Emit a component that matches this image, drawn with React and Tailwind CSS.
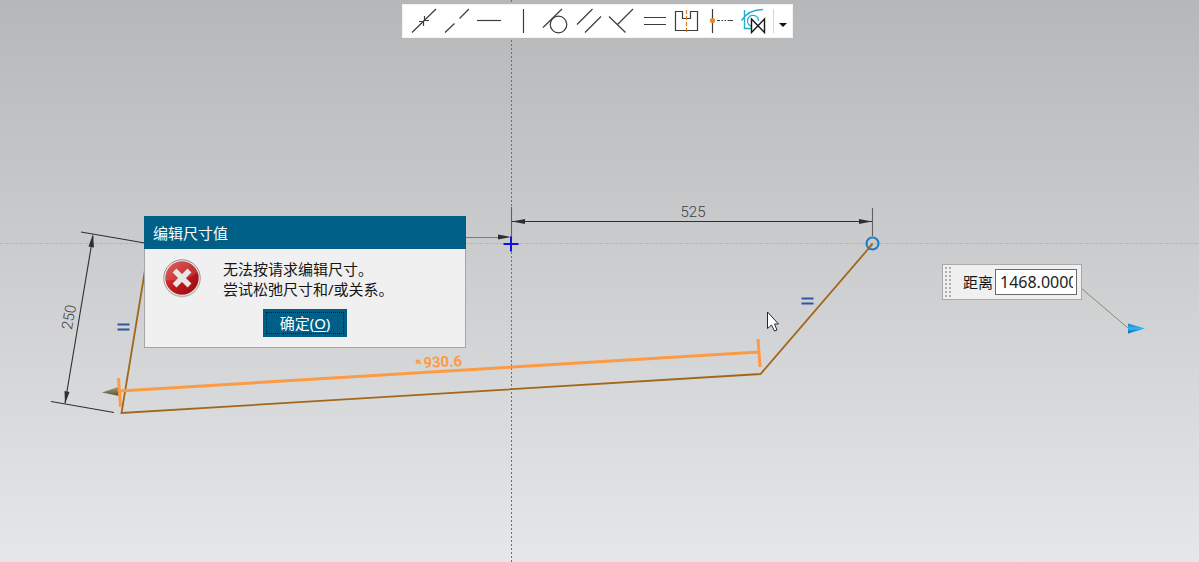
import React from "react";

const tools = [
  {
    label: "重合",
    box: "408 4 33 34",
    art: (
      <>
        <path d="M412 32.5 436 9" />
        <path d="M419 21.5H423.5V26M424.5 16V20.5H429" />
      </>
    ),
  },
  {
    label: "共线",
    box: "441 4 33 34",
    art: <path d="M445 32.5 454.5 23.5M459.5 18.5 469 9" />,
  },
  { label: "水平", box: "474 4 33 34", art: <path d="M477 20.5H501" /> },
  { label: "竖直", box: "507 4 33 34", art: <path d="M523.5 9V33" /> },
  {
    label: "相切",
    box: "540 4 33 34",
    art: (
      <>
        <path d="M543 27.5 562 9" />
        <circle cx="558.5" cy="24.5" r="8.3" />
      </>
    ),
  },
  {
    label: "平行",
    box: "573 4 33 34",
    art: <path d="M577 24.5 592.5 9M585 32.5 601 16.5" />,
  },
  {
    label: "垂直",
    box: "606 4 33 34",
    art: <path d="M609 16.5 625.5 32.5M617.5 24.5 633 9" />,
  },
  {
    label: "相等",
    box: "639 4 33 34",
    art: <path d="M644 17.5H666M644 24.5H666" />,
  },
  {
    label: "对称",
    box: "672 4 33 34",
    art: (
      <>
        <path d="M675.5 11.5H682.5V18.5H690.5V11.5H697.5V30.5H675.5Z" />
        <path d="M686.5 10V32" stroke="#e07b1a" strokeDasharray="4 2" />
      </>
    ),
  },
  {
    label: "中点",
    box: "705 4 33 34",
    art: (
      <>
        <path d="M712.5 9V33" />
        <path d="M717 20.5H720M721.5 20.5H723M724.5 20.5H726M727.5 20.5H733" />
        <circle cx="712.5" cy="20.5" r="2.6" fill="#e58a2e" stroke="none" />
      </>
    ),
  },
  {
    label: "松弛关系",
    box: "738 4 33 34",
    art: (
      <>
        <g stroke="#25aecb" strokeWidth="1.4">
          <path d="M744.5 10V28.5H751M741.5 20.5C746 13.5 754 9.5 763 9.5" />
          <path d="M751 26A5.500 5.500 0 1 1 758.500 21" />
        </g>
        <path d="M751.5 19V32.5L764.5 19V32.5Z" stroke="#161616" strokeWidth="1.4" />
      </>
    ),
  },
];

function Toolbar() {
  return (
    <div
      role="toolbar"
      aria-label="几何约束"
      className="absolute left-[402px] top-1 flex h-[34px] items-stretch border border-[#f3f3f3] bg-white pl-[5px]"
    >
      {tools.map((t) => (
        <button key={t.label} type="button" aria-label={t.label} className="-my-px w-[33px]">
          <svg
            viewBox={t.box}
            width="33"
            height="34"
            fill="none"
            stroke="#3c3c3c"
            strokeWidth="1.2"
            aria-hidden="true"
          >
            {t.art}
          </svg>
        </button>
      ))}
      <span className="my-1 ml-0.5 w-px bg-[#d5d5d5]" />
      <button
        type="button"
        aria-label="更多"
        className="flex w-[18px] items-center justify-center pt-2"
      >
        <svg viewBox="0 0 8 4" width="8" height="4" aria-hidden="true">
          <path d="M0 0H8L4 4Z" fill="#111" />
        </svg>
      </button>
    </div>
  );
}

function Sketch() {
  return (
    <svg
      viewBox="0 0 1199 562"
      width="1199"
      height="562"
      className="absolute left-0 top-0"
      fill="none"
      aria-hidden="true"
    >
      <defs>
        <linearGradient id="cone" x1="0" y1="0" x2="0" y2="1">
          <stop offset="0" stopColor="#a8a37c" />
          <stop offset="1" stopColor="#55513a" />
        </linearGradient>
        <linearGradient id="tip" x1="0" y1="0" x2="0" y2="1">
          <stop offset="0" stopColor="#0f7fd0" />
          <stop offset="0.5" stopColor="#2fb4f5" />
          <stop offset="1" stopColor="#0d5f9c" />
        </linearGradient>
      </defs>

      <path d="M0 243.5H1199" stroke="#e0b6b9" />
      <path d="M0 243.5H1199" stroke="#f09ca1" strokeDasharray="3 2" />
      <path d="M511.5 0V562" stroke="#557f62" strokeDasharray="2 2" />

      <g stroke="#2d3033" strokeWidth="1.1">
        <path d="M511.5 221.5H873" />
        <path d="M511.5 207V238M872.5 208V236" stroke="#606365" />
        <path d="M466 237.5H500" stroke="#77797b" />
        <path d="M81 232 145 243M51 401.500 114 412.500M93 236 65 403" />
      </g>
      <g fill="#2d3033">
        <path d="M512 221.500 525 219V224Z" />
        <path d="M872 221.500 859 219V224Z" />
        <path d="M511 237 498 234.500V239.500Z" />
        <path d="M93 234 88.500 246.500 94 247.500Z" />
        <path d="M65 404 64.500 391 69.500 392Z" />
      </g>

      <path d="M147 258 121.500 413 760.500 374 872.500 244" stroke="#a3671a" strokeWidth="1.8" />
      <circle cx="872.500" cy="243.500" r="6" stroke="#1b7cc4" strokeWidth="2" />
      <path d="M872.500 243.500 868 249" stroke="#a3671a" strokeWidth="1.6" />
      <path d="M503.500 244H518.500M511 236.500V251.500" stroke="#1010e0" strokeWidth="2" />
      <path d="M117.500 324.500H129.500M117.500 329.500H129.500M801.500 298.500H813.500M801.500 303.500H813.500" stroke="#2f56a0" strokeWidth="2" />

      <path d="M102 392.500 119.500 386.500V396Z" fill="url(#cone)" />
      <path d="M120 391 759 352M118.500 378 120.500 407M758 339 760 367" stroke="#fd9b45" strokeWidth="3" />

      <path d="M1081 288 1128 328" stroke="#8c8b6b" />
      <path d="M1128 323.500V333.500L1145 328.500Z" fill="url(#tip)" />

      <g fontFamily='Roboto, "Liberation Sans", sans-serif' fontSize="15" textAnchor="middle">
        <text x="693" y="217" fill="#3c3f41" fontWeight="300">525</text>
        <text x="74" y="318" fill="#3c3f41" fontWeight="300" transform="rotate(-80 74 318)">250</text>
        <text x="443" y="367" fill="#fd9b45" fontWeight="700" transform="rotate(-3 443 367)">930.6</text>
      </g>
      <path d="M416 360 421 364M416 363.500 420 360" stroke="#fd9b45" strokeWidth="1.800" />

      <path
        d="M767.500 312V328.500L771.500 325 774.500 331 777 330 774.500 324H778.500Z"
        fill="#fff"
        stroke="#25282b"
        strokeLinejoin="round"
      />
    </svg>
  );
}

function ErrorIcon() {
  return (
    <svg viewBox="0 0 40 40" width="40" height="40" className="shrink-0" aria-hidden="true">
      <defs>
        <linearGradient id="red" x1="0" y1="0" x2="1" y2="1">
          <stop offset="0" stopColor="#dc4a47" />
          <stop offset="0.5" stopColor="#c01a1e" />
          <stop offset="1" stopColor="#8f0a10" />
        </linearGradient>
        <linearGradient id="rim" x1="0" y1="0" x2="0" y2="1">
          <stop offset="0" stopColor="#808080" />
          <stop offset="1" stopColor="#b0b0b0" />
        </linearGradient>
      </defs>
      <ellipse cx="20" cy="21" rx="18.500" ry="18.500" fill="#c8c8c8" />
      <circle cx="20" cy="20" r="18.200" fill="#f1f1f1" stroke="url(#rim)" />
      <circle cx="20" cy="20" r="16.700" fill="url(#red)" />
      <path d="M4 22A16 16 0 0 1 36 14Q24 24 4 22Z" fill="#fff" opacity="0.12" />
      <path d="M12.500 12.500 27.500 27.500M27.500 12.500 12.500 27.500" stroke="#e9e6e6" strokeWidth="5.500" />
    </svg>
  );
}

function ErrorDialog() {
  return (
    <section
      role="alertdialog"
      aria-labelledby="dialog-title"
      className="absolute left-36 top-[216px] w-[322px] text-[15px] leading-5"
    >
      <h1 id="dialog-title" className="bg-[#005f87] px-[9px] pb-1.5 pt-[7px] text-white">
        编辑尺寸值
      </h1>
      <div className="border border-t-0 border-[#a5a5a5] bg-[#f0f0f0] pb-2.5 text-[#151515]">
        <div className="flex gap-[21px] pl-[17px] pt-[9px]">
          <ErrorIcon />
          <p className="pt-px">
            无法按请求编辑尺寸。
            <br />
            尝试松弛尺寸和/或关系。
          </p>
        </div>
        <div className="flex justify-center pt-2.5">
          <button type="button" className="h-7 w-[84px] bg-[#005f87] p-[3px] text-white">
            <span className="flex h-full items-center justify-center border border-dotted border-[#00202e]">
              <span>
                确定(<u className="underline-offset-2">O</u>)
              </span>
            </span>
          </button>
        </div>
      </div>
    </section>
  );
}

function DistancePanel() {
  return (
    <div className="absolute left-[942px] top-[264px] flex h-9 w-[140px] items-center border border-[#a8a9aa] bg-[#f0f0f0] pl-0.5 pr-1 text-[15px]">
      <svg viewBox="0 0 6 30" width="6" height="30" className="shrink-0" aria-hidden="true">
        <path d="M1 0V30M5 0V30" stroke="#adadad" strokeWidth="2" strokeDasharray="2 2" />
      </svg>
      <label htmlFor="distance" className="ml-3 shrink-0 text-[#151515]">
        距离
      </label>
      <input
        id="distance"
        type="text"
        defaultValue="1468.0000"
        className="ml-0.5 h-[26px] w-full min-w-0 border border-[#6a6a6a] bg-white pl-1 pr-[3px] text-base text-[#222] outline-none"
      />
    </div>
  );
}

export default function App() {
  return (
    <main className='relative min-h-screen overflow-hidden bg-linear-to-b from-[#b5b7b9] to-[#e5e7e8] font-["Noto_Sans","Noto_Sans_CJK_SC",sans-serif]'>
      <Sketch />
      <Toolbar />
      <ErrorDialog />
      <DistancePanel />
    </main>
  );
}
